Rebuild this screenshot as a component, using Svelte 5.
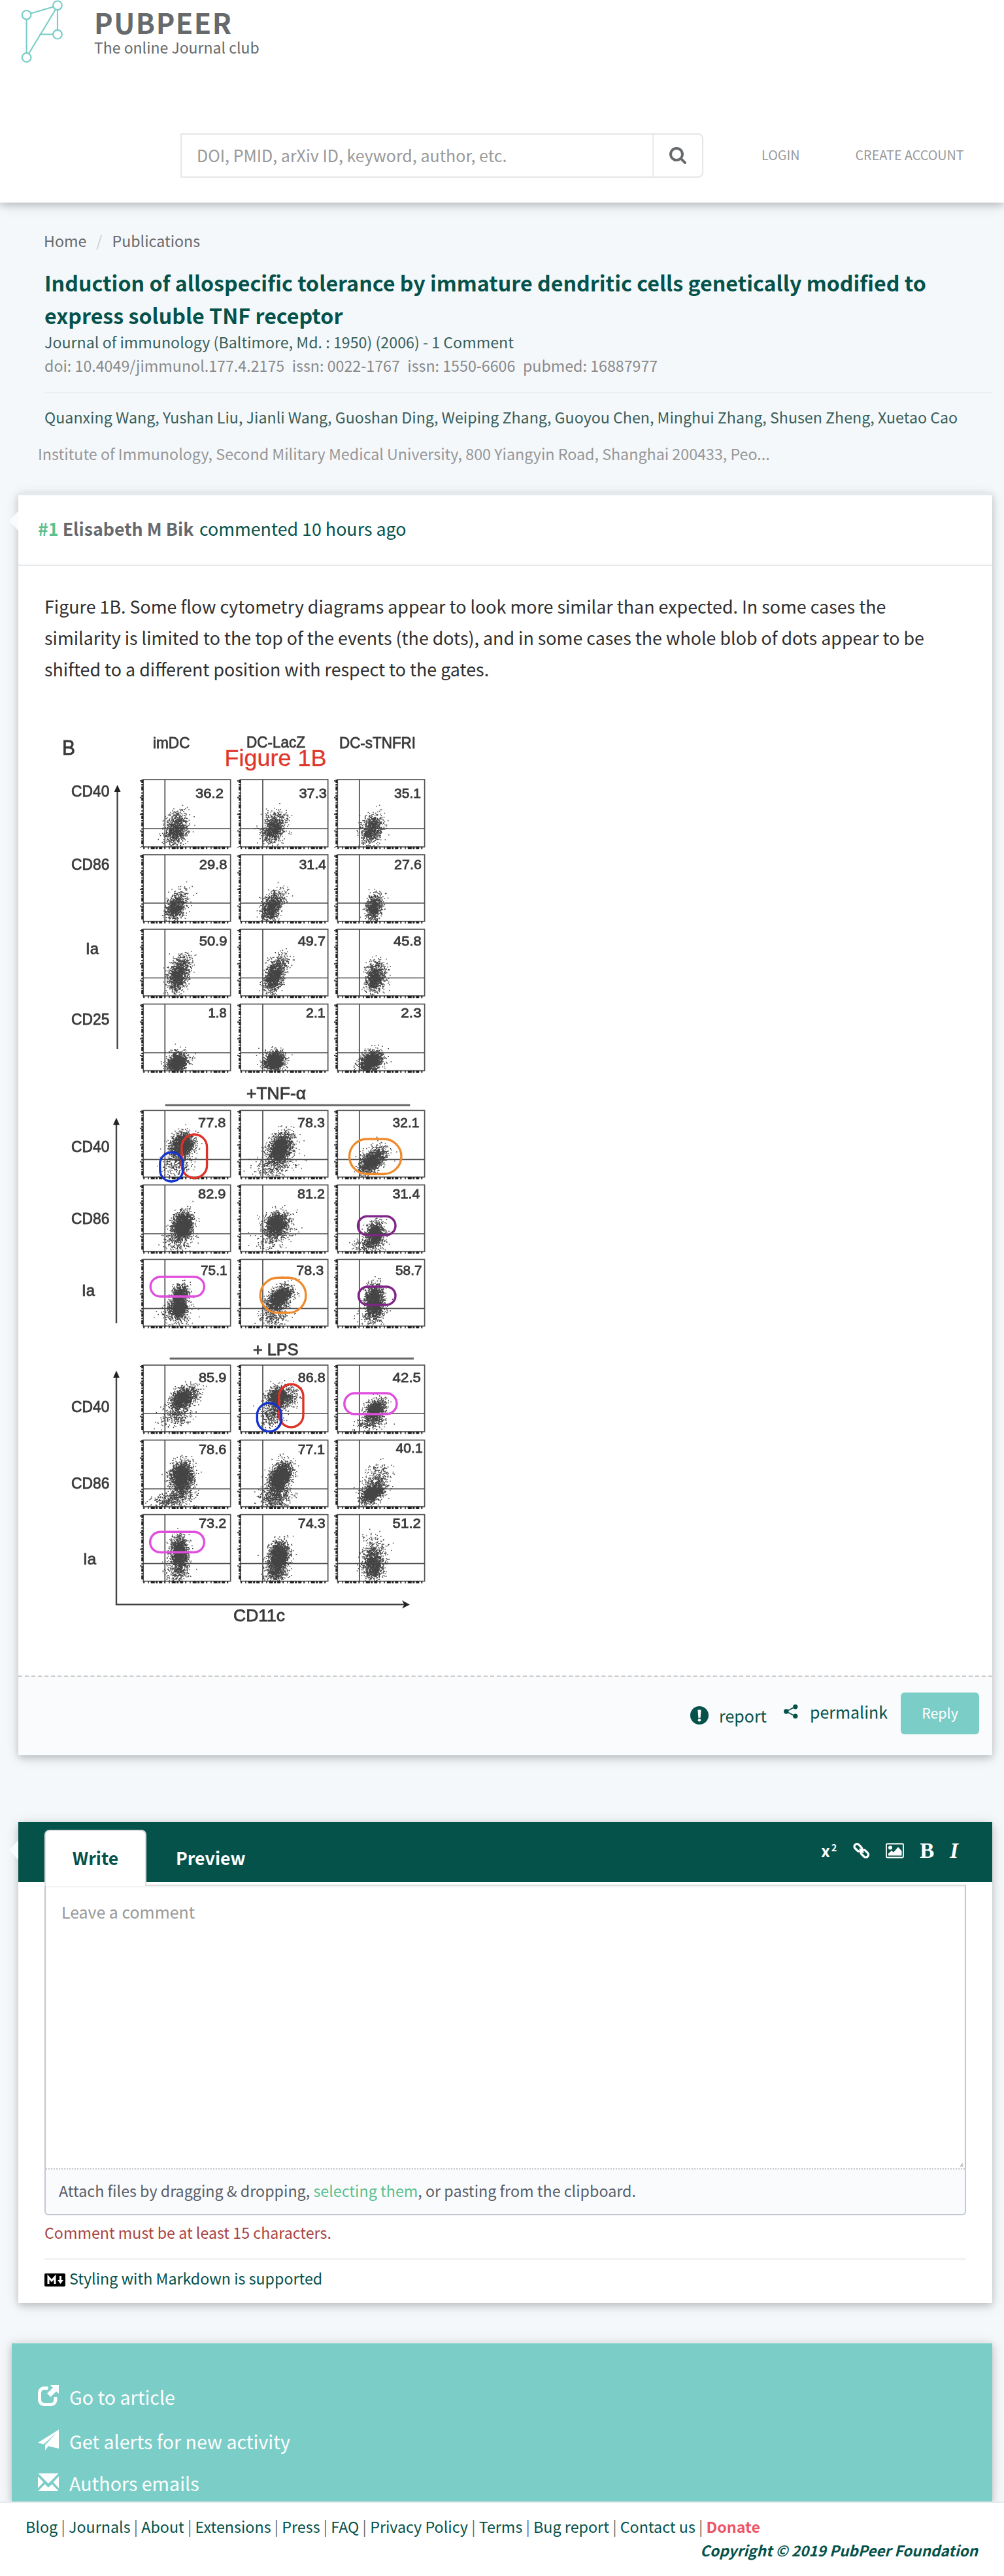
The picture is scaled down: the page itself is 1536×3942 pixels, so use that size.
<script>
  // Small deterministic generator so that the scatter clouds are stable between renders.
  function generator(seed) {
    let s = seed;
    return () => {
      s = (s * 1664525 + 1013904223) % 4294967296;
      return (s + 0.5) / 4294967296;
    };
  }

  // Cloud: [center x, center y, spread x, spread y, tilt, count], relative to the panel.
  function dots(panel, seed) {
    const rnd = generator(seed * 7919 + 13);
    let d = '';
    for (const [cx, cy, sx, sy, tilt, n] of panel.clouds) {
      for (let i = 0; i < n; i++) {
        const r = Math.sqrt(-2 * Math.log(rnd())) * 0.97;
        const a = rnd() * Math.PI * 2;
        const gx = r * Math.cos(a);
        const gy = r * Math.sin(a);
        const x = cx + gx * sx - gy * tilt;
        const y = cy + gy * sy;
        if (x < 2 || x > panel.w - 2 || y < 4 || y > panel.h - 1) continue;
        d += `M${(panel.x + x).toFixed(1)} ${(panel.y + y).toFixed(1)}h1.5v1.5h-1.5z`;
      }
    }
    return d;
  }

  const cols = [
    { x: 219.2, w: 133.5, v: 252.3 },
    { x: 368.2, w: 133.5, v: 402 },
    { x: 516.3, w: 133.3, v: 549.8 }
  ];

  const rows = [
    { y: 1193, h: 103, line: 1268, cells: [
      ['36.2', 300, 341, 1220.7, [[50, 75, 8.5, 12, 2, 1000]]],
      ['37.3', 458.4, 499, 1220.7, [[50, 74, 8.5, 12, 2, 1000]]],
      ['35.1', 604, 643, 1220.7, [[52, 75, 8, 11, 2, 900]]]] },
    { y: 1308, h: 102, line: 1382, cells: [
      ['29.8', 305.7, 346.5, 1330.4, [[48, 81, 7, 9, 2, 700], [56, 65, 8, 9, 3, 150]]],
      ['31.4', 458.4, 498, 1330.4, [[46, 80, 7, 10, 2, 850], [53, 68, 8, 9, 3, 200]]],
      ['27.6', 604, 644, 1330.4, [[55, 82, 6, 9, 1, 700], [57, 68, 6, 7, 1, 90]]]] },
    { y: 1422, h: 102, line: 1496.5, cells: [
      ['50.9', 305.7, 346.5, 1446.8, [[53, 70, 7.5, 12, 2, 1150], [60, 50, 8, 8, 2, 140]]],
      ['49.7', 456.7, 497, 1446.8, [[50, 73, 7, 11, 2, 1150], [60, 52, 8, 9, 2, 200]]],
      ['45.8', 603, 643.7, 1446.8, [[57, 76, 7, 10, 1, 850], [60, 58, 8, 7, 1, 170]]]] },
    { y: 1536.5, h: 102, line: 1611, cells: [
      ['1.8', 319.6, 345.7, 1557, [[51, 89, 7, 7.5, 1, 1200], [52, 86, 11, 9, 1, 150]]],
      ['2.1', 469, 496.7, 1557, [[51, 87, 7, 7.5, 1, 1200], [50, 86, 10, 9, 1, 200]]],
      ['2.3', 614.3, 643.7, 1557, [[50, 88, 7.5, 8, 3, 1500], [52, 84, 10, 9, 2, 150]]]] },
    { y: 1699.3, h: 102, line: 1774.3, cells: [
      ['77.8', 304, 344.5, 1724.7, [[59, 52, 8.5, 9, 1, 1800], [52, 78, 11, 12, 2, 330]]],
      ['78.3', 456, 496, 1724.7, [[60, 56, 8.5, 11, 3, 1800], [52, 84, 15, 9, 4, 380]]],
      ['32.1', 601.6, 640.4, 1724.7, [[53, 77, 8, 9, 5, 1400], [58, 70, 12, 11, 4, 130]]]] },
    { y: 1813.3, h: 102, line: 1888, cells: [
      ['82.9', 304, 344.5, 1834.3, [[60, 61, 7.5, 9.5, 1, 1900], [53, 80, 11, 12, 2, 330]]],
      ['81.2', 456, 496, 1834.3, [[54, 59, 8, 8.5, 1, 1200], [53, 70, 14, 16, 5, 500]]],
      ['31.4', 601.6, 641.5, 1834.3, [[57, 73, 6.5, 8.5, 1, 1050], [48, 90, 11, 7, 2, 330]]]] },
    { y: 1927.3, h: 102, line: 2002.3, cells: [
      ['75.1', 308, 346.5, 1951, [[56, 52, 6.5, 7, 1, 650], [53, 74, 7, 8, 1, 1050], [50, 84, 12, 10, 1, 160]]],
      ['78.3', 454.3, 494.3, 1951, [[57, 60, 8, 9, 4, 1500], [66, 52, 9, 8, 2, 150], [50, 88, 11, 7, 2, 230]]],
      ['58.7', 606, 644.5, 1951, [[56, 64, 7, 12, 0, 1600], [54, 82, 10, 9, 1, 200]]]] },
    { y: 2089, h: 102, line: 2163, cells: [
      ['85.9', 305, 345.3, 2115, [[58, 51, 8, 8, 3, 1400], [73, 44, 8, 7, 1, 190], [50, 76, 12, 10, 4, 330]]],
      ['86.8', 456.7, 496.7, 2115, [[57, 49, 8, 7.5, 1, 1400], [74, 50, 8, 10, 1, 190], [48, 74, 9, 11, 2, 350]]],
      ['42.5', 601.6, 643, 2115, [[58, 68, 7.5, 8, 2, 1050], [50, 86, 11, 7, 3, 280]]]] },
    { y: 2203.7, h: 102, line: 2278.3, cells: [
      ['78.6', 305, 345.3, 2225, [[58, 54, 8.5, 10.5, 1, 1800], [60, 72, 9, 10, 2, 330], [44, 90, 16, 7, 6, 380]]],
      ['77.1', 456.7, 496, 2225, [[60, 56, 8, 11, 3, 2100], [53, 86, 11, 9, 1, 600]]],
      ['40.1', 606.5, 645.7, 2223, [[53, 81, 8, 7.5, 4, 1200], [58, 62, 10, 12, 4, 360]]]] },
    { y: 2317.7, h: 102, line: 2392.7, cells: [
      ['73.2', 305, 345.3, 2337.7, [[55, 57, 6.5, 12, 0, 1400], [53, 84, 9, 11, 1, 360]]],
      ['74.3', 456.7, 496.7, 2337.7, [[58, 63, 7.5, 10, 1, 1800], [54, 86, 8, 9, 1, 600]]],
      ['51.2', 601.6, 643, 2337.7, [[54, 76, 7.5, 13, 0, 1000], [56, 60, 10, 16, 0, 280]]]] }
  ];

  const panels = rows.flatMap((row, r) =>
    row.cells.map(([value, x1, x2, base, clouds], c) => {
      const p = { x: cols[c].x, w: cols[c].w, v: cols[c].v, y: row.y, h: row.h, line: row.line, value, x1, x2, base, clouds };
      return { ...p, d: dots(p, r * 3 + c + 1) };
    })
  );

  // [text, left, right, baseline, size]
  const labels = [
    ['B', 95, 115, 1154.6, 32],
    ['imDC', 234, 290.5, 1145, 24],
    ['DC-LacZ', 377, 467, 1144, 24],
    ['DC-sTNFRI', 519, 636, 1145, 24],
    ['CD40', 109, 167.500, 1219, 24.5],
    ['CD86', 109, 167.500, 1330.7, 24.5],
    ['Ia', 131, 151, 1459.6, 24.5],
    ['CD25', 109, 167.500, 1568.2, 24.5],
    ['+TNF-α', 377, 468, 1682.3, 25],
    ['CD40', 109, 167.500, 1763.3, 24.5],
    ['CD86', 109, 167.500, 1872.7, 24.5],
    ['Ia', 125, 145, 1983, 24.5],
    ['+ LPS', 387, 456.5, 2074.3, 25],
    ['CD40', 109, 167.500, 2161.3, 24.5],
    ['CD86', 109, 167.500, 2277.7, 24.5],
    ['Ia', 127, 147, 2394, 24.5],
    ['CD11c', 357, 436, 2480.7, 25.5]
  ];

  // [left, top, right, bottom, radius, colour]
  const rings = [
    [278, 1736, 316.6, 1802.7, 19.3, '#dd3227'],
    [244.8, 1763.5, 279.8, 1808, 17.5, '#1433d0'],
    [534.5, 1743, 614, 1796.5, 27, '#ee8b2c'],
    [547.5, 1861.3, 605, 1890, 14.3, '#7f2587'],
    [230.2, 1954, 312.4, 1984, 15, '#e04ede'],
    [398.3, 1955.3, 468, 2009, 27, '#ee8b2c'],
    [548.5, 1969, 605, 1996.7, 13.8, '#7f2587'],
    [426.8, 2118.3, 464, 2184, 18.6, '#dd3227'],
    [393.4, 2147, 430.4, 2190.5, 18.5, '#1433d0'],
    [526.8, 2132, 607, 2164, 16, '#e04ede'],
    [229.7, 2344.2, 312.4, 2375.5, 15.6, '#e04ede']
  ];

  const footerLinks = ['Blog', 'Journals', 'About', 'Extensions', 'Press', 'FAQ', 'Privacy Policy', 'Terms', 'Bug report', 'Contact us'];
</script>

<div class="page">
  <header class="top">
    <div class="brand">
      <svg class="logo" viewBox="30 0 70 98" width="70" height="98">
        <g fill="none" stroke="#7bcdc8" stroke-width="2.2">
          <path d="M47.200 20.500 81.500 10.500M40.600 30v51M44 82 85 14.500M88 15.500v30M60.700 52.700h20.500" />
          <circle cx="40.600" cy="22.800" r="6.800" />
          <circle cx="88" cy="8.300" r="6.800" />
          <circle cx="88" cy="52.700" r="6.800" />
          <circle cx="40.600" cy="88" r="6.800" />
        </g>
      </svg>
      <div class="names">
        <div class="name">PUBPEER</div>
        <div class="tagline">The online Journal club</div>
      </div>
    </div>
    <div class="navrow">
      <div class="search">
        <div class="field">DOI, PMID, arXiv ID, keyword, author, etc.</div>
        <div class="go">
          <svg viewBox="0 0 1664 1664" width="26" height="26"><path fill="#676a6c" d="M1152 704q0-185-131.500-316.500t-316.500-131.500-316.500 131.500-131.500 316.500 131.500 316.500 316.500 131.500 316.500-131.500 131.500-316.500zm512 832q0 52-38 90t-90 38q-54 0-90-38l-343-342q-179 124-399 124-143 0-273.500-55.500t-225-150-150-225-55.500-273.500 55.500-273.500 150-225 225-150 273.500-55.500 273.500 55.500 225 150 150 225 55.500 273.500q0 220-124 399l343 343q37 37 37 90z" /></svg>
        </div>
      </div>
      <span class="nav login">LOGIN</span>
      <span class="nav">CREATE ACCOUNT</span>
    </div>
  </header>

  <main>
    <section class="publication">
      <nav class="crumbs"><span>Home</span><span class="slash">/</span><span>Publications</span></nav>
      <h1>Induction of allospecific tolerance by immature dendritic cells genetically modified to express soluble TNF receptor</h1>
      <div class="journal">Journal of immunology (Baltimore, Md. : 1950) (2006) - 1 Comment</div>
      <div class="ids"><span>doi: 10.4049/jimmunol.177.4.2175</span><span>issn: 0022-1767</span><span>issn: 1550-6606</span><span>pubmed: 16887977</span></div>
      <div class="authors">Quanxing Wang, Yushan Liu, Jianli Wang, Guoshan Ding, Weiping Zhang, Guoyou Chen, Minghui Zhang, Shusen Zheng, Xuetao Cao</div>
      <div class="institute">Institute of Immunology, Second Military Medical University, 800 Yiangyin Road, Shanghai 200433, Peo...</div>
    </section>

    <article class="card comment">
      <span class="notch"></span>
      <div class="byline"><span><b class="num">#1</b> <b>Elisabeth M Bik</b> <span class="when">commented 10 hours ago</span></span></div>
      <p class="text">Figure 1B. Some flow cytometry diagrams appear to look more similar than expected. In some cases the similarity is limited to the top of the events (the dots), and in some cases the whole blob of dots appear to be shifted to a different position with respect to the gates.</p>
      <svg class="figure" viewBox="68 1100 600 1400" width="600" height="1400">
        <g class="soft">
          {#each panels as p}
            <rect x={p.x} y={p.y} width={p.w} height={p.h} fill="none" stroke="#555" stroke-width="1.7" />
            <path d="M{p.v} {p.y}v{p.h}M{p.x} {p.line}h{p.w}" stroke="#4a4a4a" stroke-width="1.7" fill="none" />
            <path d="M{p.x - 1.500} {p.y}v{p.h}" stroke="#222" stroke-width="3" stroke-dasharray="5 2 2 1.500 6 3 2 2 3 1" />
            <path d="M{p.x - 4} {p.y + 1}v{p.h}" stroke="#444" stroke-width="2.500" stroke-dasharray="2 23.500" />
            <path d="M{p.x} {p.y + p.h + 1.500}h{p.w}" stroke="#222" stroke-width="3.500" stroke-dasharray="2 5 1.500 3 6 1.500 3 2 5 3" />
            <path d={p.d} fill="#444" />
            <text x={p.x1 - 1} y={p.base} font-size="21" textLength={p.x2 - p.x1 + 2} lengthAdjust="spacingAndGlyphs">{p.value}</text>
          {/each}
          {#each labels as [t, x1, x2, y, size]}
            <text x={x1} {y} font-size={size} textLength={x2 - x1} lengthAdjust="spacingAndGlyphs">{t}</text>
          {/each}
          <g fill="none" stroke="#444" stroke-width="2.400">
            <path d="M179.600 1208v397M178 1718v307M178 2106v349.300h444" />
            <path d="M252.700 1691.300h374.600M259.600 2079h373.400" stroke="#666" stroke-width="3" />
          </g>
          <path fill="#222" d="M179.600 1201l5 11h-10zM178 1710.500l5 11h-10zM178 2097.500l5 11h-10zM627 2455.500l-12-6.500 3.500 6.500-3.500 6z" />
        </g>
        {#each rings as [x1, y1, x2, y2, r, colour]}
          <rect x={x1} y={y1} width={x2 - x1} height={y2 - y1} rx={r} fill="none" stroke={colour} stroke-width="3.400" />
        {/each}
        <text class="red" x="343.500" y="1172" font-size="34.500" textLength="156" lengthAdjust="spacingAndGlyphs">Figure 1B</text>
      </svg>
      <div class="actions">
        <span class="act report">
          <svg viewBox="0 0 28 28" width="28" height="28"><circle cx="14" cy="14" r="14" fill="#05524a" /><path fill="#fff" d="M11.400 5.500h5.200l-1 12.200h-3.200z" /><circle cx="14" cy="21.300" r="2.300" fill="#fff" /></svg>
          report
        </span>
        <span class="act permalink">
          <svg viewBox="0 0 22 22" width="22" height="22"><path d="M18 3.500 4 11l14 7.500" fill="none" stroke="#05524a" stroke-width="1.800" /><g fill="#05524a"><circle cx="17.800" cy="3.800" r="3.600" /><circle cx="3.800" cy="11" r="3.700" /><circle cx="17.800" cy="18.200" r="3.600" /></g></svg>
          permalink
        </span>
        <span class="reply">Reply</span>
      </div>
    </article>

    <section class="card editor">
      <span class="notch low"></span>
      <div class="bar">
        <span class="tab active">Write</span>
        <span class="tab">Preview</span>
        <div class="tools">
          <span class="power">x<sup>2</sup></span>
          <svg viewBox="0 0 26 26" width="26" height="26"><g fill="none" stroke="#fff" stroke-width="3.300"><rect x="1.300" y="4.400" width="13" height="8" rx="4" transform="rotate(45 7.800 8.400)" /><rect x="11.300" y="13.400" width="13" height="8" rx="4" transform="rotate(45 17.800 17.400)" /><path d="M10 10.200l6 6" stroke-width="2.600" /></g></svg>
          <svg viewBox="0 0 28 24" width="28" height="24"><rect x="1" y="1.500" width="26" height="21" rx="1.500" fill="none" stroke="#fff" stroke-width="1.800" /><circle cx="7" cy="7.500" r="3" fill="#fff" /><path fill="#fff" d="M4 19.500v-3l5-4.500 3 2.500 7-8 5.500 6v7z" /></svg>
          <span class="serif">B</span>
          <span class="serif slanted">I</span>
        </div>
      </div>
      <div class="box">
        <div class="area">
          Leave a comment
          <svg class="grip" viewBox="0 0 6 6" width="6" height="6"><path d="M1 5.500 5 .5M3.800 5.500 5.200 3.500" stroke="#555" stroke-width=".9" /></svg>
        </div>
        <div class="attach"><span>Attach files by dragging &amp; dropping, <span class="pick">selecting them</span>, or pasting from the clipboard.</span></div>
      </div>
      <div class="error">Comment must be at least 15 characters.</div>
      <div class="styling">
        <svg viewBox="0 0 32 20" width="32" height="20"><rect width="32" height="20" rx="2" /><path fill="none" stroke="#fff" stroke-width="3" d="M6 16V5.500l5 5.500 5-5.500V16" /><path fill="#fff" d="M23 4h3v6h3l-4.500 6L20 10h3z" /></svg>
        Styling with Markdown is supported
      </div>
    </section>

    <aside>
      <div class="link">
        <svg viewBox="0 0 32 32" width="32" height="32"><path d="M15.500 4.500H9.500a7 7 0 0 0-7 7V22.500a7 7 0 0 0 7 7h10.500a7 7 0 0 0 7-7V18" fill="none" stroke="#fff" stroke-width="5" /><path fill="#fff" d="M19 0h13v13l-4-3.500-8.500 8.500-5.500-5.500 9-8.500z" /></svg>
        Go to article
      </div>
      <div class="link">
        <svg viewBox="0 0 32 32" width="32" height="32"><path fill="#fff" d="M32 0 0 20l8.500 2.500L28 5.500 13 24.500 32 29zM28.500 5 11 23.500V32l5-7z" /></svg>
        Get alerts for new activity
      </div>
      <div class="link last">
        <svg viewBox="0 0 32 27" width="32" height="27"><path fill="#fff" d="M.5 0h31L16 15.500zM0 4.500 8.500 13.500 0 22.500zM32 4.500 23.500 13.500 32 22.500zM.5 27 10.500 16.500 16 21.500 21.500 16.500 31.500 27z" /></svg>
        Authors emails
      </div>
    </aside>
  </main>

  <footer>
    <div class="links">{#each footerLinks as l}<span>{l}</span>{' | '}{/each}<b>Donate</b></div>
    <div class="copyright">Copyright © 2019 PubPeer Foundation</div>
  </footer>
</div>

<style>
  :global(body) {
    background: #f4f8fb;
  }

  .page {
    display: flex;
    flex-direction: column;
    box-sizing: border-box;
    width: 1536px;
    height: 3942px;
    overflow: hidden;
    font-family: 'Noto Sans CJK SC', 'Noto Sans', sans-serif;
    font-size: 23.22px;
    line-height: 38px;
    color: #676a6c;
    background: #f4f8fb;
  }

  svg {
    display: block;
    flex: none;
  }

  .top {
    position: relative;
    flex: none;
    height: 310px;
    background: #fff;
    box-shadow: 0 4px 10px rgba(0, 0, 0, 0.16), 0 4px 20px rgba(0, 0, 0, 0.12);
  }

  .brand {
    display: flex;
    gap: 44px;
    height: 204px;
    padding-left: 30px;
  }

  .names {
    padding-top: 13px;
  }

  .name {
    font-size: 43px;
    font-weight: 700;
    line-height: 40px;
    letter-spacing: 1.5px;
  }

  .tagline {
    margin-top: 1px;
    font-size: 23px;
    line-height: 36px;
  }

  .navrow {
    display: flex;
    align-items: center;
    height: 68px;
    padding-left: 276px;
  }

  .search {
    display: flex;
    box-sizing: border-box;
    width: 800px;
    height: 68px;
    border: 2px solid #e5e6e7;
    border-radius: 2px 8px 8px 2px;
  }

  .field {
    box-sizing: border-box;
    flex: none;
    width: 720px;
    padding-left: 23px;
    font-size: 25px;
    line-height: 62px;
    color: #999;
  }

  .go {
    display: flex;
    flex: 1;
    align-items: center;
    justify-content: center;
    border-left: 2px solid #e7eaec;
  }

  .nav {
    padding-bottom: 2px;
    font-size: 19.75px;
    color: #999;
  }

  .login {
    margin: 0 85px 0 89px;
  }

  .publication {
    padding: 39px 18px 0 68px;
  }

  .crumbs {
    display: flex;
    gap: 15px;
    margin-left: -1px;
  }

  .slash {
    color: #ccc;
  }

  h1 {
    max-width: 1400px;
    margin: 20px 0 -1px;
    font-size: 32.2px;
    font-weight: 700;
    line-height: 50px;
    color: #05524a;
  }

  .journal {
    line-height: 35.5px;
    color: #39605a;
  }

  .ids {
    display: flex;
    gap: 11.5px;
    padding-bottom: 23px;
    line-height: 36.5px;
    margin-top: -1px;
    color: #8a8a8a;
    border-bottom: 2px solid #eee;
  }

  .authors {
    margin-top: 17px;
    color: #39605a;
  }

  .institute {
    margin: 18px 0 41px -10px;
    font-size: 23.28px;
    color: #979797;
  }

  .card {
    position: relative;
    margin: 0 18px 0 28px;
    background: #fff;
    box-shadow: 0 4px 10px rgba(0, 0, 0, 0.16), 0 4px 20px rgba(0, 0, 0, 0.12);
  }

  .notch {
    position: absolute;
    top: 24px;
    left: -14px;
    width: 14px;
    height: 30px;
    background: #fafbfc;
    clip-path: polygon(100% 0, 0 50%, 100% 100%);
  }

  .notch.low {
    top: 28px;
  }

  .comment {
    border-top: 4px solid #e7eaec;
  }

  .byline {
    display: flex;
    align-items: center;
    height: 101px;
    padding: 0 30px 5px;
    font-size: 26.8px;
    border-bottom: 2px solid #e7eaec;
  }

  .num {
    color: #5ac18e;
  }

  .when {
    margin-left: 2.5px;
    color: #05524a;
  }

  .text {
    max-width: 1390px;
    margin: 38px 0 52px 40px;
    font-size: 26.82px;
    line-height: 48px;
    color: #2f2f2f;
  }

  .figure {
    margin: 0 0 64px 40px;
    font-family: 'Liberation Sans', Arial, sans-serif;
  }

  .figure text {
    fill: #3a3a3a;
    stroke: #3a3a3a;
    stroke-width: 0.8px;
  }

  .figure .red {
    fill: #e0362c;
    stroke: #e0362c;
    stroke-width: 0.3px;
  }

  .soft {
    filter: blur(0.5px);
  }

  .actions {
    display: flex;
    box-sizing: border-box;
    align-items: flex-start;
    justify-content: flex-end;
    height: 122px;
    padding: 24px 20px 0;
    font-size: 24.95px;
    color: #05524a;
    background: #fafbfd;
    border-top: 2px dashed #ccc;
  }

  .act {
    display: flex;
    box-sizing: border-box;
    align-items: center;
    height: 64px;
  }

  .report {
    gap: 16px;
    padding-top: 6px;
    margin-right: 26px;
  }

  .permalink {
    gap: 18px;
    padding-bottom: 6px;
    margin-right: 20px;
  }

  .reply {
    width: 120px;
    height: 64px;
    font-size: 21.4px;
    line-height: 61px;
    color: #fff;
    text-align: center;
    background: #7bcdc8;
    border-radius: 6px;
  }

  .editor {
    height: 736px;
    margin-top: 102px;
  }

  .bar {
    display: flex;
    box-sizing: border-box;
    height: 92px;
    padding: 12px 52px 0 40px;
    background: #05524a;
  }

  .tab {
    padding-left: 45px;
    font-size: 26.7px;
    font-weight: 700;
    line-height: 85px;
    color: #fff;
  }

  .tab.active {
    position: relative;
    z-index: 1;
    box-sizing: border-box;
    width: 156px;
    height: 86px;
    padding: 0;
    line-height: 82px;
    color: #05524a;
    text-align: center;
    background: #fff;
    border: 2px solid #ddd;
    border-bottom: 0;
    border-radius: 8px 8px 0 0;
  }

  .tools {
    display: flex;
    gap: 24px;
    align-items: center;
    height: 64px;
    margin-left: auto;
    color: #fff;
  }

  .power {
    display: flex;
    width: 25px;
    font-size: 24px;
    font-weight: 700;
    line-height: 38px;
  }

  .power sup {
    margin-left: 2px;
    font-size: 14.5px;
    line-height: 28px;
  }

  .serif {
    font: 700 33px/40px 'Liberation Serif', serif;
  }

  .slanted {
    font-style: italic;
  }

  .box {
    box-sizing: border-box;
    height: 506px;
    margin: 4px 40px 0;
    border: 2px solid #c3c8d0;
    border-top-color: #ddd;
    border-radius: 0 0 6px 6px;
  }

  .area {
    position: relative;
    box-sizing: border-box;
    height: 432px;
    padding: 19px 24px;
    font-size: 24.9px;
    line-height: 40px;
    color: #999;
    box-shadow: inset 0 2px 3px rgba(0, 0, 0, 0.06);
  }

  .grip {
    position: absolute;
    right: 2px;
    bottom: 2px;
  }

  .attach {
    display: flex;
    box-sizing: border-box;
    align-items: center;
    height: 70px;
    padding: 0 20px 5px;
    font-size: 23.27px;
    color: #586069;
    background: #fafbfd;
    border-top: 2px dotted #c8c8c8;
    border-radius: 0 0 5px 5px;
  }

  .pick {
    color: #5ac18e;
  }

  .error {
    padding: 7px 0 21px;
    margin: 0 40px;
    color: #a94442;
    border-bottom: 2px solid #eee;
  }

  .styling {
    display: flex;
    gap: 6px;
    margin: 9px 40px 0;
    color: #05524a;
  }

  .styling svg {
    margin-top: 12px;
  }

  aside {
    box-sizing: border-box;
    height: 244px;
    padding: 48px 40px 0;
    margin: 60px 18px 0;
    overflow: hidden;
    font-size: 28.6px;
    color: #fff;
    background: #7bcdc8;
    border-top: 2px solid #e7eaec;
    box-shadow: 0 4px 10px rgba(0, 0, 0, 0.16), 0 4px 20px rgba(0, 0, 0, 0.12);
  }

  .link {
    display: flex;
    gap: 16px;
    align-items: center;
    height: 68px;
  }

  .link svg {
    margin-bottom: 4px;
  }

  .link.last {
    height: 60px;
  }

  footer {
    position: relative;
    flex: 1;
    padding: 18px 40px 0 39px;
    line-height: 36px;
    background: #fff;
    border-top: 2px solid #e7eaec;
  }

  .links {
    font-size: 23.3px;
  }

  .links span {
    color: #05524a;
  }

  .links b {
    color: #ed5565;
  }

  .copyright {
    font-size: 22.5px;
    font-style: italic;
    font-weight: 700;
    color: #05524a;
    text-align: right;
  }
</style>
